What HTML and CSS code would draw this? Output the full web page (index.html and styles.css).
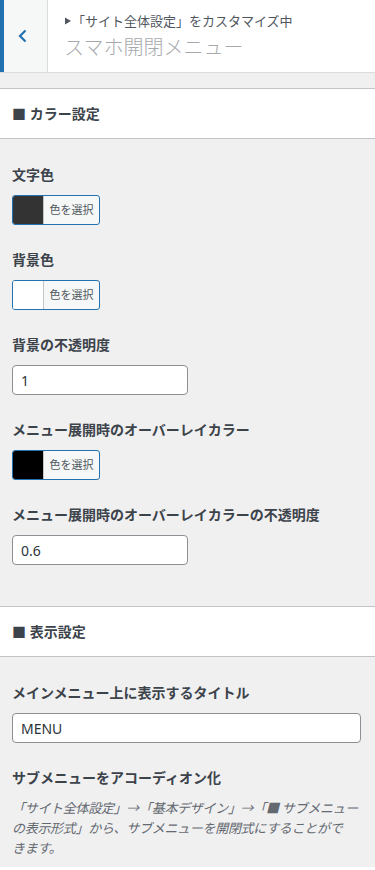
FILE: index.html
```html
<!DOCTYPE html>
<html lang="ja">
<head>
    <meta charset="UTF-8">
    <meta name="viewport" content="width=device-width, initial-scale=1.0">
    <title>スマホ開閉メニュー</title>
    <link rel="stylesheet" href="styles.css">
</head>
<body>
    <div class="panel">
        <header class="panel-head">
            <button class="back" aria-label="戻る">
                <svg width="9" height="14" viewBox="0 0 9 14"><polyline points="7.5,1.5 2,7 7.5,12.5" fill="none" stroke="#2271b1" stroke-width="2.2"/></svg>
            </button>
            <div class="head-titles">
                <span class="action"><svg class="tri" width="6" height="8" viewBox="0 0 6 8"><polygon points="0,0.5 6,4 0,7.5" fill="#50575e"/></svg>「サイト全体設定」をカスタマイズ中</span>
                <h2 class="panel-title">スマホ開閉メニュー</h2>
            </div>
        </header>
        <div class="spacer"></div>

        <h3 class="section-title">■ カラー設定</h3>
        <ul class="controls first">
            <li class="control">
                <span class="label">文字色</span>
                <button class="color-btn"><span class="swatch dark"></span><span class="color-text">色を選択</span></button>
            </li>
            <li class="control">
                <span class="label">背景色</span>
                <button class="color-btn"><span class="swatch white"></span><span class="color-text">色を選択</span></button>
            </li>
            <li class="control">
                <span class="label">背景の不透明度</span>
                <input class="text-input" type="text" value="1">
            </li>
            <li class="control">
                <span class="label">メニュー展開時のオーバーレイカラー</span>
                <button class="color-btn"><span class="swatch black"></span><span class="color-text">色を選択</span></button>
            </li>
            <li class="control">
                <span class="label">メニュー展開時のオーバーレイカラーの不透明度</span>
                <input class="text-input" type="text" value="0.6">
            </li>
        </ul>

        <h3 class="section-title">■ 表示設定</h3>
        <ul class="controls last">
            <li class="control">
                <span class="label">メインメニュー上に表示するタイトル</span>
                <input class="text-input wide" type="text" value="MENU">
            </li>
            <li class="control">
                <span class="label">サブメニューをアコーディオン化</span>
                <p class="desc">「サイト全体設定」→「基本デザイン」→「■ サブメニュー<br>の表示形式」から、サブメニューを開閉式にすることがで<br>きます。</p>
            </li>
        </ul>
    </div>
</body>
</html>
```

FILE: styles.css
```css
body {
    margin: 0;
    padding: 0;
    background-color: #fff;
    color: #3c434a;
    font-family: "Noto Sans", "Noto Sans CJK JP", sans-serif;
}
.panel-head {
    display: flex;
    height: 72px;
    background-color: #fff;
    border-bottom: 1px solid #dcdcde;
}
.back {
    width: 48px;
    box-sizing: border-box;
    border: none;
    border-left: 4px solid #2271b1;
    border-right: 1px solid #dcdcde;
    background-color: #f6f7f7;
    display: flex;
    align-items: center;
    padding: 0 0 0 14px;
    cursor: pointer;
}
.head-titles {
    padding: 12px 0 0 16px;
}
.action {
    display: block;
    font-size: 13px;
    line-height: 18px;
    color: #50575e;
}
.action .tri {
    margin: 0 1px 0 1px;
    vertical-align: 1px;
}
.panel-title {
    margin: 4px 0 0;
    font-size: 20px;
    line-height: 28px;
    font-weight: 300;
    color: #a7aaad;
}
.spacer {
    height: 15px;
    background-color: #f0f0f1;
}
.section-title {
    margin: 0;
    height: 49px;
    line-height: 50px;
    padding: 0 12px;
    background-color: #fff;
    border-top: 1px solid #c3c4c7;
    border-bottom: 1px solid #c3c4c7;
    font-size: 14px;
    font-weight: 700;
    color: #3c434a;
}
.controls {
    list-style: none;
    margin: 0;
    padding: 26px 14px 41px 12px;
    background-color: #f0f0f1;
}
.controls.last {
    padding-bottom: 9px;
}
.control {
    margin-bottom: 25px;
}
.control:last-child {
    margin-bottom: 0;
}
.label {
    display: block;
    font-size: 14px;
    line-height: 20px;
    font-weight: 700;
    margin-bottom: 10px;
}
.color-btn {
    display: flex;
    width: 88px;
    height: 30px;
    box-sizing: border-box;
    padding: 0;
    border: 1px solid #2271b1;
    border-radius: 3px;
    overflow: hidden;
    background-color: #f6f7f7;
    cursor: pointer;
}
.swatch {
    width: 30px;
    border-right: 1px solid #c3c4c7;
}
.swatch.dark { background-color: #333; }
.swatch.white { background-color: #fff; }
.swatch.black { background-color: #000; }
.color-text {
    flex: 1;
    font-family: "Noto Sans", "Noto Sans CJK JP", sans-serif;
    font-size: 11px;
    line-height: 28px;
    color: #50575e;
    text-align: center;
}
.text-input {
    display: block;
    width: 176px;
    height: 30px;
    box-sizing: border-box;
    padding: 0 8px;
    border: 1px solid #8c8f94;
    border-radius: 4px;
    background-color: #fff;
    font-family: "Noto Sans", "Noto Sans CJK JP", sans-serif;
    font-size: 14px;
    color: #2c3338;
}
.text-input.wide {
    width: 100%;
}
.desc {
    margin: 5px 0 0;
    font-size: 13px;
    line-height: 20px;
    font-style: italic;
    letter-spacing: -0.3px;
    color: #646970;
}
```
